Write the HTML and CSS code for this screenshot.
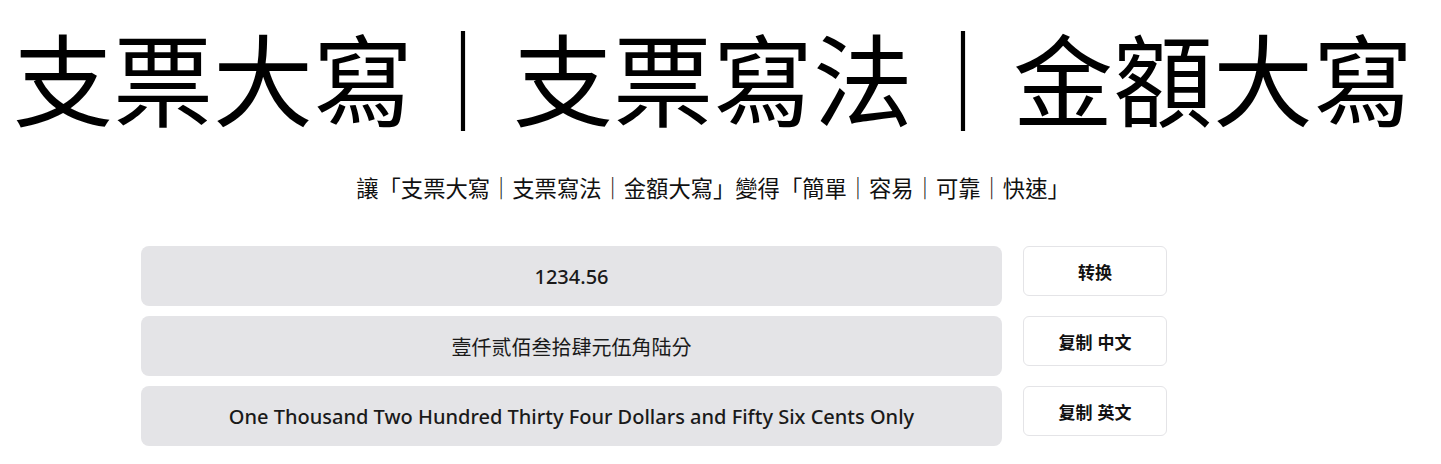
FILE: index.html
```html
<!DOCTYPE html>
<html lang="zh-Hant">
<head>
<meta charset="utf-8">
<title>支票大寫</title>
<link rel="stylesheet" href="styles.css">
</head>
<body>
<header class="hero">
  <h1 class="title">支票大寫｜支票寫法｜金額大寫</h1>
  <p class="subtitle">讓「支票大寫｜支票寫法｜金額大寫」變得「簡單｜容易｜可靠｜快速」</p>
</header>
<main class="container">
  <div class="row">
    <div class="field field-en">1234.56</div>
    <button class="btn">转换</button>
  </div>
  <div class="row">
    <div class="field field-cjk">壹仟贰佰叁拾肆元伍角陆分</div>
    <button class="btn">复制 中文</button>
  </div>
  <div class="row">
    <div class="field field-en">One Thousand Two Hundred Thirty Four Dollars and Fifty Six Cents Only</div>
    <button class="btn">复制 英文</button>
  </div>
  <p class="note">支票大寫金額寫法說明與範例</p>
</main>
</body>
</html>
```
FILE: styles.css
```css
html, body {
  margin: 0;
  padding: 0;
  background: #ffffff;
}
body {
  font-family: "Noto Sans", "Noto Sans CJK TC", sans-serif;
  color: #111111;
  width: 1426px;
}
.hero {
  text-align: center;
}
.title {
  margin: 0;
  padding-top: 26px;
  font-family: "Noto Sans CJK TC", sans-serif;
  font-size: 100px;
  font-weight: 400;
  line-height: 100px;
  color: #000;
}
.subtitle {
  margin: 46px 0 0;
  font-family: "Noto Sans CJK TC", sans-serif;
  font-size: 22.3px;
  line-height: 30px;
  color: #111;
}
.container {
  width: 1026px;
  margin: 44px 0 0 141px;
  display: flex;
  flex-direction: column;
  gap: 10px;
}
.row {
  display: flex;
  align-items: flex-start;
  gap: 21px;
}
.field {
  width: 861px;
  height: 60px;
  flex: none;
  background: #e4e4e7;
  border-radius: 8px;
  display: flex;
  align-items: center;
  justify-content: center;
  font-family: "Noto Sans", "Noto Sans CJK SC", sans-serif;
  font-size: 20px;
  color: #1a1a1a;
}
.field-en {
  font-weight: 500;
}
.field-cjk {
  font-family: "Noto Sans CJK SC", sans-serif;
}
.btn {
  width: 144px;
  height: 50px;
  flex: none;
  background: #fff;
  border: 1px solid #e4e4e7;
  border-radius: 6px;
  font-family: "Noto Sans CJK SC", sans-serif;
  font-size: 17px;
  font-weight: 700;
  color: #111;
  padding: 0;
  word-spacing: 1px;
}
.note {
  width: 795px;
  margin: 4px 0 0;
  text-align: center;
  font-family: "Noto Sans CJK TC", sans-serif;
  font-size: 18px;
  color: #999;
}
```
